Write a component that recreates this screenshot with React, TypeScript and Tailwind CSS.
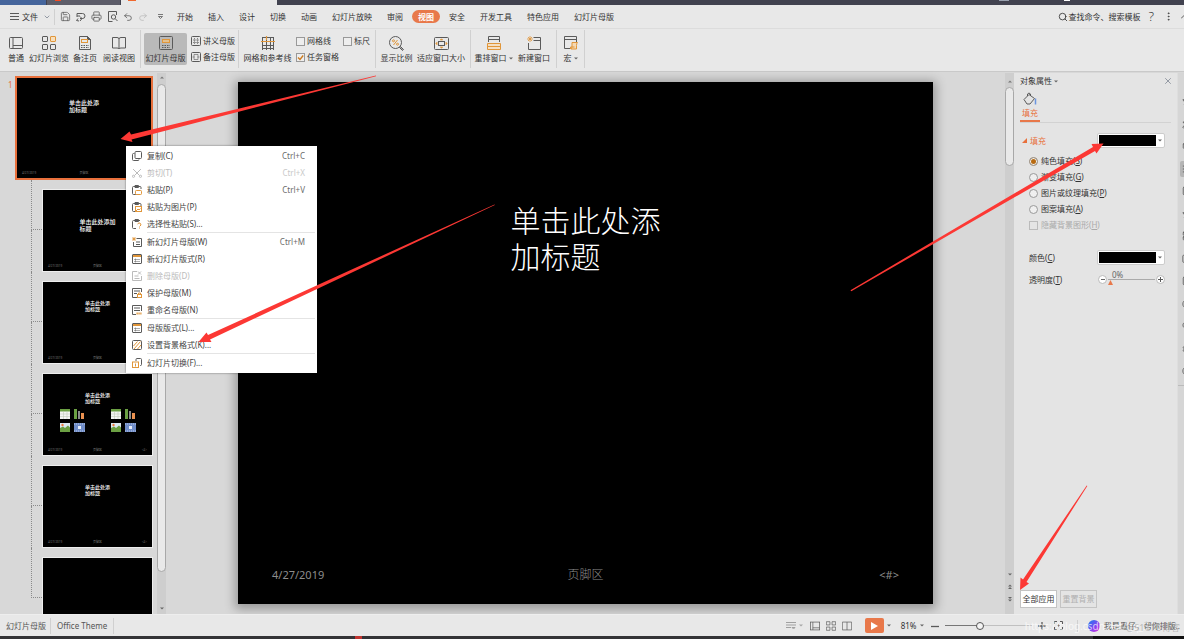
import type { ReactNode } from "react";
import {
  Box, ChevronDown, Circle, Clock, CloudUpload, FolderOpen, Image, LayoutTemplate, MoreVertical, Printer,
  Redo2, Save, Search, Settings, SlidersHorizontal, Square, Star, Undo2, Wand2, X,
} from "lucide-react";

const tabs = ["开始", "插入", "设计", "切换", "动画", "幻灯片放映", "审阅", "视图", "安全", "开发工具", "特色应用", "幻灯片母版"];

const GRAY = "#5a5a5a";
const ORANGE = "#e0963a";

function Icon({ size = 14, box = 14, color = GRAY, children }: { size?: number; box?: number; color?: string; children: ReactNode }) {
  return (
    <svg width={size} height={size} viewBox={`0 0 ${box} ${box}`} fill="none" stroke={color} strokeWidth="1" className="shrink-0" aria-hidden="true">
      {children}
    </svg>
  );
}

function Caret() {
  return <svg width="4" height="3" viewBox="0 0 4 3" className="shrink-0" aria-hidden="true"><path d="M0 .5h4L2 2.5z" fill="#666" /></svg>;
}

const NormalIcon = () => <Icon><rect x=".5" y="1.5" width="13" height="11" rx="1" /><path d="M4 1.5v11M4 9.5h9.500" /></Icon>;
const SorterIcon = () => (
  <Icon>
    <rect x=".5" y=".5" width="5" height="5" rx=".5" />
    <rect x="8.500" y=".5" width="5" height="5" rx=".5" stroke={ORANGE} fill="#f7dfbd" />
    <rect x=".5" y="8.500" width="5" height="5" rx=".5" />
    <rect x="8.500" y="8.500" width="5" height="5" rx=".5" />
  </Icon>
);
const NotesIcon = () => (
  <Icon>
    <path d="M1.500 .5h8l3 3v10h-11z" />
    <path d="M9.500 .5l3 3h-3z" fill={GRAY} />
    <rect x="3.500" y="3.500" width="6" height="3" stroke={ORANGE} />
    <path d="M3 9.500h8M3 11.500h8" strokeDasharray="1.500 1" />
  </Icon>
);
const ReadingIcon = () => <Icon><path d="M.5 1.500h4.500q2 0 2 1.500q0-1.500 2-1.500h4.500v10.500h-4.500q-2 0-2 1q0-1-2-1H.5zM7 3v10" /></Icon>;
const MasterIcon = () => (
  <Icon>
    <rect x=".5" y=".5" width="13" height="13" rx="1" />
    <rect x="3.500" y="3.500" width="7" height="3" stroke={ORANGE} fill="#e3c08e" />
    <path d="M3 9.500h8M3 11.500h8" strokeDasharray="1.500 1" />
  </Icon>
);
const HandoutIcon = () => (
  <Icon size={10} box={10}><rect x=".5" y=".5" width="9" height="9" rx="1" /><path d="M3.500 2v6M6.500 2v6M2 4h6M2 6.500h6" strokeWidth=".7" strokeDasharray="1.500 .7" /></Icon>
);
const NotesMasterIcon = () => (
  <Icon size={10} box={10}><rect x=".5" y=".5" width="9" height="9" rx="1" /><path d="M3 2.500h4v5H3zM1.500 5h2M6.500 5h2" strokeWidth=".6" /></Icon>
);
const GridIcon = () => (
  <Icon><path d="M1.500 1v13M5.500 1v13M9.500 1v13M12.500 1v13M1 1.500h12M1 9.500h12M1 12.500h12" /><path d="M0 5.500h14M5.500 0v4" stroke={ORANGE} strokeWidth="1.200" /></Icon>
);
const ZoomIcon = () => (
  <Icon size={15} box={15}>
    <circle cx="6.500" cy="6.500" r="6" />
    <path d="M10.500 11.500l1-1 3 3-1 1z" fill="#aaa" />
    <path d="M4.500 9l4-5" stroke={ORANGE} />
    <circle cx="4.500" cy="4.800" r="1" stroke={ORANGE} />
    <circle cx="8.500" cy="8.200" r="1" stroke={ORANGE} />
  </Icon>
);
const FitIcon = () => (
  <Icon size={15} box={15}>
    <rect x=".5" y="1.500" width="14" height="12" rx="1" />
    <rect x="4.500" y="5.500" width="6" height="4" />
    <path d="M6.300 4L7.500 2.800 8.700 4zM6.300 11l1.200 1.200L8.700 11zM3 6.300L1.900 7.500 3 8.700zM12 6.300l1.100 1.200L12 8.700z" fill={ORANGE} stroke={ORANGE} strokeWidth=".8" />
  </Icon>
);
const ArrangeIcon = () => (
  <Icon><path d="M1.500 6V.5h11V6M1.500 3.500h11" /><path d="M.5 7.500h13v6H.5zM.5 10.500h13" stroke={ORANGE} fill="#f5e0c4" /></Icon>
);
const NewWindowIcon = () => (
  <Icon>
    <path d="M6.500 1.500h7v12h-12V7M6.500 4.500h7" />
    <path d="M3 0v6M0 3h6M1 1l4 4M5 1L1 5" stroke={ORANGE} strokeWidth=".8" />
  </Icon>
);
const MacroIcon = () => (
  <Icon>
    <path d="M6 12.500H.5V.5h12V6M.5 3.500h12" />
    <path d="M8 6.500h5.500q-1 1-1 3v3.500H7q1-1 1-3zM6.500 13v-2h4" stroke={ORANGE} fill="#f5d9b3" />
  </Icon>
);

function RibbonButton({ label, icon, width, caret, active }: { label: string; icon: ReactNode; width: string; caret?: boolean; active?: boolean }) {
  return (
    <button className={`flex h-8 shrink-0 flex-col items-center justify-between rounded-xs pt-[3px] pb-px whitespace-nowrap ${width} ${active ? "bg-[#b9b9b9]" : ""}`}>
      {icon}
      <span className="flex items-center gap-0.5 leading-3">{label}{caret && <Caret />}</span>
    </button>
  );
}

function RibbonCheck({ label, checked }: { label: string; checked?: boolean }) {
  return (
    <label className="flex items-center gap-0.5 leading-3 whitespace-nowrap">
      <span className="grid">
        <input type="checkbox" defaultChecked={checked} className="peer col-start-1 row-start-1 size-[9px] appearance-none border border-[#999] bg-[#eee]" />
        <svg viewBox="0 0 9 9" className="pointer-events-none col-start-1 row-start-1 hidden size-[9px] peer-checked:block"><path d="M2 4.500l2 2 3.200-4" fill="none" stroke="#cc7a1e" strokeWidth="1.400" /></svg>
      </span>
      {label}
    </label>
  );
}

const Divider = ({ className = "" }: { className?: string }) => <div className={`w-px shrink-0 bg-[#d0d0d0] ${className}`} />;

function MenuBar() {
  return (
    <div className="flex h-6 items-center border-b border-[#dcdcdc] whitespace-nowrap">
      <button className="flex items-center gap-[3px] pl-2.5">
        <Icon size={9} box={9}><path d="M0 1.500h9M0 4.500h9M0 7.500h9" /></Icon>
        <span>文件</span>
        <ChevronDown size={8} strokeWidth={2} className="ml-0.5 text-gray-500" />
      </button>
      <Divider className="ml-[3px] h-4" />
      <div className="ml-[5px] flex items-center gap-[5px] text-[#5a5a5a]">
        <button aria-label="保存"><Save size={11} strokeWidth={1.7} /></button>
        <button aria-label="输出">
          <Icon size={10} box={10}><path d="M1 1.500h5.500a2.500 2.500 0 010 5H4M1 4h3M1 1.500V5M2 6.500l-1.500 2L3 9M4 9l2-2.500L4 4.500" /></Icon>
        </button>
        <button aria-label="打印"><Printer size={11} strokeWidth={1.7} /></button>
        <button aria-label="打印预览">
          <Icon size={11} box={11}><path d="M9.500 4V.5h-8v10h4" /><circle cx="6.500" cy="6" r="2.200" /><path d="M8.200 7.700L10.500 10" /></Icon>
        </button>
        <button aria-label="撤销"><Undo2 size={10} strokeWidth={1.9} /></button>
        <button aria-label="恢复" className="text-[#bbb]"><Redo2 size={10} strokeWidth={1.9} /></button>
        <button aria-label="更多" className="ml-1"><Icon size={7} box={7}><path d="M1 1.500h5M1.500 3.500L3.500 5.500l2-2z" strokeWidth=".8" /></Icon></button>
      </div>
      <nav className="ml-[13px] flex items-center gap-[15px]">
        {tabs.map(t => (
          <button key={t} className={t === "视图" ? "-mx-1.5 h-[13px] rounded-full bg-[#e8784a] px-1.5 font-bold text-white" : ""}>{t}</button>
        ))}
      </nav>
      <div className="ml-auto flex shrink-0 items-center">
        <button className="flex items-center"><Search size={10} strokeWidth={2} />查找命令、搜索模板</button>
        <button aria-label="帮助" className="ml-2 text-[13px] leading-none font-light">?</button>
        <button aria-label="更多选项" className="ml-[9px]"><MoreVertical size={11} strokeWidth={1.6} /></button>
        <button aria-label="收起" className="-mr-[3px] ml-[7px]"><Icon size={6} box={6}><path d="M0 4.500l3-3 3 3" /></Icon></button>
      </div>
    </div>
  );
}

function Ribbon() {
  return (
    <div className="flex h-[43px] items-center border-b border-[#c9c9c9] pb-0.5 pl-[5px]">
      <RibbonButton label="普通" icon={<NormalIcon />} width="w-[22px]" />
      <RibbonButton label="幻灯片浏览" icon={<SorterIcon />} width="w-11" />
      <RibbonButton label="备注页" icon={<NotesIcon />} width="w-7" />
      <RibbonButton label="阅读视图" icon={<ReadingIcon />} width="w-10" />
      <Divider className="ml-px h-[38px]" />
      <div className="ml-[3px] flex items-center gap-1">
        <RibbonButton label="幻灯片母版" icon={<MasterIcon />} width="w-[43px]" active />
        <div className="flex flex-col gap-1">
          <button className="flex items-center gap-0.5 leading-3 whitespace-nowrap"><HandoutIcon />讲义母版</button>
          <button className="flex items-center gap-0.5 leading-3 whitespace-nowrap"><NotesMasterIcon />备注母版</button>
        </div>
      </div>
      <Divider className="ml-[3px] h-[38px]" />
      <RibbonButton label="网格和参考线" icon={<GridIcon />} width="w-[57px]" />
      <div className="grid w-[79px] grid-cols-[47px_auto] gap-y-1">
        <RibbonCheck label="网格线" />
        <RibbonCheck label="标尺" />
        <RibbonCheck label="任务窗格" checked />
      </div>
      <Divider className="h-[38px]" />
      <RibbonButton label="显示比例" icon={<ZoomIcon />} width="w-[41px]" />
      <RibbonButton label="适应窗口大小" icon={<FitIcon />} width="w-12" />
      <Divider className="ml-[5px] h-[38px]" />
      <RibbonButton label="重排窗口" icon={<ArrangeIcon />} width="w-[45px]" caret />
      <RibbonButton label="新建窗口" icon={<NewWindowIcon />} width="w-9" />
      <Divider className="ml-1 h-[38px]" />
      <RibbonButton label="宏" icon={<MacroIcon />} width="w-[27px]" caret />
      <Divider className="h-[38px]" />
    </div>
  );
}

function ThumbFooter() {
  return (
    <div className="mt-auto grid grid-cols-3 px-[5px] pb-[3px] text-[3px] leading-1 font-normal text-[#777]">
      <span>4/27/2019</span>
      <span className="text-center">页脚区</span>
      <span className="text-right">&lt;#&gt;</span>
    </div>
  );
}

function ContentIcons() {
  return (
    <svg width="25" height="24" viewBox="0 0 25 24" aria-hidden="true">
      <path d="M0 1h10v9H0z" fill="#f4f4f4" /><path d="M0 0h10v2.500H0z" fill="#6ba043" />
      <path d="M0 5h10M0 7.500h10M3.500 2.500V10M7 2.500V10" stroke="#b8c4b0" strokeWidth=".5" />
      <path d="M14 0h3v10h-3z" fill="#6ba043" /><path d="M18 2h2v8h-2z" fill="#8a8a8a" /><path d="M21 4h3v6h-3z" fill="#ea9150" />
      <path d="M0 14h10v9H0z" fill="#dce9f3" /><path d="M0 23v-4l3-1.500 2 1.500 3-2.500 2 2V23z" fill="#6ba043" /><circle cx="2.500" cy="16" r="1.200" fill="#ee7b3c" />
      <path d="M14 14h11v9H14z" fill="#6f8cc8" /><path d="M14 15h11M14 22h11" stroke="#b9c8e8" strokeDasharray="1 1" /><path d="M18 17h3v3h-3z" fill="#e8eefa" />
    </svg>
  );
}

const layouts = [
  { lines: ["单击此处添加", "标题"], big: true },
  { lines: ["单击此处添", "加标题"] },
  { lines: ["单击此处添", "加标题"], content: true },
  { lines: ["单击此处添", "加标题"] },
  { lines: [] },
];

function Thumbnails() {
  return (
    <aside className="min-h-0 w-[157px] shrink-0 overflow-hidden pt-[3px]">
      <div className="flex">
        <span className="w-[15px] pt-[3px] pl-2 text-[8px] leading-3 text-[#e8703c]">1</span>
        <button className="flex h-[104px] w-[138px] flex-col border-2 border-[#e8703c] bg-black text-left font-medium text-white">
          <span className="mx-auto mt-[22px] text-[6px] leading-[7px]">单击此处添<br />加标题</span>
          <ThumbFooter />
        </button>
      </div>
      {layouts.map((l, i) => (
        <div key={i} className="ml-[31px] flex h-[92px]">
          <div className="flex w-[11px] flex-col">
            <div className="h-[50px] border-b border-l border-dotted border-[#8a8a8a]" />
            {i < layouts.length - 1 && <div className="flex-1 border-l border-dotted border-[#8a8a8a]" />}
          </div>
          <button className="mt-[9px] flex w-[111px] flex-col border border-[#eee] bg-black text-left font-medium text-white">
            {l.lines.length > 0 && (
              <>
                <span className={`mx-auto ${l.big ? "mt-[29px] text-[6px] leading-[7px]" : "mt-[18px] text-[5px] leading-[6px]"}`}>
                  {l.lines[0]}<br />{l.lines[1]}
                </span>
                {l.content && <div className="mt-[5px] flex justify-center gap-[26px]"><ContentIcons /><ContentIcons /></div>}
                <ThumbFooter />
              </>
            )}
          </button>
        </div>
      ))}
    </aside>
  );
}

function Slide() {
  return (
    <main className="flex min-w-0 flex-1 px-[72px] pt-[9px] pb-[10px]">
      <div className="flex flex-1 flex-col bg-black shadow-[0_2px_10px_3px_rgba(0,0,0,0.3)]">
        <h1 className="mx-auto mt-[121px] text-[30px] leading-9 font-light text-white">单击此处添<br />加标题</h1>
        <footer className="mt-auto grid grid-cols-3 px-[34px] pb-[21px] text-[11px] leading-4 text-[#8d8d8d]">
          <span>4/27/2019</span>
          <span className="text-center text-[12px] font-light">页脚区</span>
          <span className="text-right">&lt;#&gt;</span>
        </footer>
      </div>
    </main>
  );
}

function FillRadio({ label, hotkey, checked }: { label: string; hotkey: string; checked?: boolean }) {
  return (
    <label className="flex h-4 items-center gap-[3px]">
      <input type="radio" name="fill" defaultChecked={checked} className="size-[9px] appearance-none rounded-full border border-[#999] bg-[#efefef] checked:bg-[#b86a10] checked:shadow-[inset_0_0_0_1px_#f4f4f4]" />
      <span>{label}(<u>{hotkey}</u>)</span>
    </label>
  );
}

function ColorPicker({ label }: { label: string }) {
  return (
    <button aria-label={label} aria-haspopup="listbox" className="flex h-[15px] w-[68px] items-center gap-0.5 rounded-xs border border-[#ccc] bg-white p-px">
      <span className="h-[11px] w-[57px] bg-black" />
      <Caret />
    </button>
  );
}

function PropertiesPanel() {
  return (
    <aside className="flex w-[163px] shrink-0 flex-col bg-[#e4e4e4] px-1.5 pt-0.5 pb-1.5">
      <div className="flex h-3 items-center">
        <button className="flex items-center gap-0.5">对象属性<Caret /></button>
        <button aria-label="关闭" className="-mr-0.5 ml-auto text-gray-500"><X size={10} strokeWidth={1.6} /></button>
      </div>
      <div className="mt-[5px] flex border-b border-[#d2d2d2]">
        <button className="flex w-5 flex-col items-center border-b-2 border-[#e8784a] text-[#e8703c]">
          <Icon size={14} box={14}>
            <path d="M1 7.500l5-5 5.500 4-4.500 5.500H4zM4.500 4V2q1.500-2 3 0v2" />
            <path d="M12.500 6.500v6" stroke="#6b95df" strokeWidth="1.500" />
          </Icon>
          <span className="leading-3.5">填充</span>
        </button>
      </div>
      <div className="mt-2.5 flex items-center">
        <button className="flex items-center gap-0.5 pl-0.5 text-[#e8703c]">
          <svg width="6" height="6" viewBox="0 0 6 6" aria-hidden="true"><path d="M5 0v5H0z" fill="#e8703c" /></svg>填充
        </button>
        <div className="ml-auto pr-1.5"><ColorPicker label="填充颜色" /></div>
      </div>
      <fieldset className="mt-[5px] pl-[9px]">
        <FillRadio label="纯色填充" hotkey="S" checked />
        <FillRadio label="渐变填充" hotkey="G" />
        <FillRadio label="图片或纹理填充" hotkey="P" />
        <FillRadio label="图案填充" hotkey="A" />
        <label className="flex h-4 items-center gap-[3px] text-[#aaa]">
          <input type="checkbox" disabled className="size-[9px] appearance-none border border-[#bbb]" />
          <span>隐藏背景图形(<u>H</u>)</span>
        </label>
      </fieldset>
      <div className="mt-[17px] flex items-center justify-between pr-1.5 pl-[9px]">
        <span>颜色(<u>C</u>)</span>
        <ColorPicker label="颜色" />
      </div>
      <div className="mt-[7px] flex items-center justify-between pr-1.5 pl-[9px]">
        <label htmlFor="alpha">透明度(<u>T</u>)</label>
        <div className="flex h-[15px] w-[67px] items-center gap-px">
          <button aria-label="减少" className="grid size-[9px] place-items-center rounded-full border border-[#bbb] bg-white"><span className="h-px w-1 bg-[#666]" /></button>
          <div className="flex flex-1 flex-col pb-0.5">
            <output htmlFor="alpha" className="pl-1 leading-2 text-[#666]">0%</output>
            <input id="alpha" type="range" defaultValue={0} className="h-[7px] w-full appearance-none bg-[linear-gradient(#aaa,#aaa)] bg-[length:100%_1px] bg-top bg-no-repeat [&::-webkit-slider-thumb]:h-[5px] [&::-webkit-slider-thumb]:w-[5px] [&::-webkit-slider-thumb]:appearance-none [&::-webkit-slider-thumb]:bg-[#e8784a] [&::-webkit-slider-thumb]:[clip-path:polygon(50%_0,100%_100%,0_100%)]" />
          </div>
          <button aria-label="增加" className="grid size-[9px] place-items-center rounded-full border border-[#bbb] bg-white"><Icon size={5} box={5}><path d="M0 2.500h5M2.500 0v5" /></Icon></button>
        </div>
      </div>
      <div className="mt-auto flex gap-[3px]">
        <button className="h-[18px] w-[37px] border border-[#c4c4c4] bg-white">全部应用</button>
        <button disabled className="h-[18px] w-[37px] border border-[#c4c4c4] text-[#b0b0b0]">重置背景</button>
      </div>
    </aside>
  );
}

const sideTools = [Star, Wand2, Box, SlidersHorizontal, Square, Star, LayoutTemplate, FolderOpen, Image, Circle, CloudUpload, Settings, Clock];

function SideTools() {
  return (
    <div className="w-[7px] shrink-0 overflow-hidden border-l border-[#dedede] bg-[#d6d6d6] pt-5">
      <div className="flex h-[286px] flex-col justify-between text-[#555]">
        {sideTools.map((Tool, i) => (
          <button key={i} aria-label={`工具 ${i + 1}`} className={`ml-0.5 flex h-4 w-4 items-center rounded-xs pl-0.5 ${i === 3 ? "bg-[#b5b5b5]" : ""}`}>
            <Tool size={10} strokeWidth={2} className="shrink-0" />
          </button>
        ))}
      </div>
      <div className="mt-1.5 h-px bg-[#bbb]" />
    </div>
  );
}

function StatusBar() {
  return (
    <footer className="relative flex h-[22px] shrink-0 items-center border-t border-[#eee] bg-[#e8e8e8] whitespace-nowrap text-[#555]">
      <span className="pl-1.5">幻灯片母版</span>
      <Divider className="ml-1 h-4" />
      <span className="ml-1.5">Office Theme</span>
      <Divider className="ml-1.5 h-4" />
      <div className="ml-auto flex items-center pr-1">
        <button aria-label="备注" className="flex items-center gap-0.5 opacity-50"><Icon size={11} box={11}><path d="M0 2.500h10M0 5h10M0 7.500h5M6 7.500h3L7.500 9z" /></Icon><Caret /></button>
        <button aria-label="普通视图" className="ml-[7px]"><Icon size={10} box={14}><rect x=".5" y="1.500" width="13" height="11" /><path d="M4 1.500v11M4 9.500h9.500" /></Icon></button>
        <button aria-label="幻灯片浏览" className="ml-1.5"><Icon size={10} box={14}><path d="M.5 1h5v4.500h-5zM8.500 1h5v4.500h-5zM.5 8.500h5V13h-5zM8.500 8.500h5V13h-5z" /></Icon></button>
        <button aria-label="阅读视图" className="ml-1.5"><Icon size={10} box={14}><path d="M.5 1.500h13v11H.5zM7 1.500v11" /></Icon></button>
        <button aria-label="放映" className="ml-[13px] grid h-[15px] w-[19px] place-items-center rounded-xs bg-[#e8784a]"><svg width="7" height="8" viewBox="0 0 7 8"><path d="M0 0l7 4-7 4z" fill="#fff" /></svg></button>
        <button aria-label="放映选项" className="ml-[3px]"><Caret /></button>
        <button className="ml-2.5 flex w-[23px] items-center justify-between text-[#333]">81%<Caret /></button>
        <button aria-label="缩小" className="ml-[7px]"><Icon size={8} box={8}><path d="M0 4.500h8" strokeWidth="1.300" /></Icon></button>
        <input type="range" aria-label="缩放" defaultValue={39} className="ml-1.5 h-2.5 w-[87px] appearance-none bg-[linear-gradient(90deg,#777_40%,#c0c0c0_40%)] bg-[length:100%_1px] bg-center bg-no-repeat [&::-webkit-slider-thumb]:size-2 [&::-webkit-slider-thumb]:appearance-none [&::-webkit-slider-thumb]:rounded-full [&::-webkit-slider-thumb]:border [&::-webkit-slider-thumb]:border-[#555] [&::-webkit-slider-thumb]:bg-[#f4f4f4]" />
        <button aria-label="放大" className="ml-1.5"><Icon size={8} box={8}><path d="M0 4h8M4 0v8" strokeWidth="1.300" /></Icon></button>
        <button aria-label="适应窗口" className="ml-2"><Icon size={9} box={9}><path d="M.5 3V.5H3M6 .5h2.500V3M8.500 6v2.500H6M3 8.500H.5V6" /><path d="M4 4h1v1H4z" /></Icon></button>
        <Divider className="ml-3.5 h-3" />
        <button className="ml-2.5 flex items-center gap-1">
          <span className="size-3 rounded-full bg-[linear-gradient(135deg,#3b6cf0_20%,#8a3ff0_60%,#e23ad0)]" />我是墨仔，帮你排版..
        </button>
      </div>
      <span className="pointer-events-none absolute right-[35px] bottom-1 text-[10px] leading-3 text-white/70">https://blog.csdn.net/qq_3</span>
      <span className="pointer-events-none absolute right-1 bottom-0.5 text-[9px] leading-3 text-[#999]/60">@51CTO博客</span>
    </footer>
  );
}

// [name, shortcut]; a null entry is a separator
const menuItems: ([string, string?] | null)[] = [
  ["复制(C)", "Ctrl+C"], ["剪切(T)", "Ctrl+X"], ["粘贴(P)", "Ctrl+V"], ["粘贴为图片(P)"], ["选择性粘贴(S)..."],
  null,
  ["新幻灯片母版(W)", "Ctrl+M"], ["新幻灯片版式(R)"], ["删除母版(D)"], ["保护母版(M)"], ["重命名母版(N)"],
  null,
  ["母版版式(L)..."], ["设置背景格式(K)..."],
  null,
  ["幻灯片切换(F)..."],
];
const disabledItems = ["剪切(T)", "删除母版(D)"];

const clip = "M7 9.500H1.500q-1 0-1-1v-6q0-1 1-1H8q1 0 1 1V4M3 .5h3.500v2H3z";
const layoutFrame = <><rect x=".5" y=".5" width="9" height="9" rx=".5" /><path d="M1 2h8" stroke={ORANGE} strokeWidth="2" /><path d="M3.500 4.500v4M2 5.500h6M2 7.500h6" strokeWidth=".5" /></>;
const menuIcons: Record<string, ReactNode> = {
  "复制(C)": <><rect x="3" y=".5" width="6.500" height="7" rx="1" /><path d="M2.500 2.500h-1q-1 0-1 1v5q0 1 1 1H6q1 0 1-1" /></>,
  "剪切(T)": <><path d="M1 1l6.500 6.500M9 1L2.500 7.500" /><circle cx="1.500" cy="8.300" r="1.100" /><circle cx="8.500" cy="8.300" r="1.100" /></>,
  "粘贴(P)": <><path d={clip} /><rect x="3.500" y="5.500" width="6" height="4" rx=".8" stroke={ORANGE} fill="#fff" /></>,
  "粘贴为图片(P)": <><path d={clip} /><rect x="3.500" y="4.500" width="6" height="5" stroke={ORANGE} fill="#fff" /><path d="M4 9l2-2 1 1 1.500-1.500" stroke={ORANGE} /></>,
  "选择性粘贴(S)...": <><path d="M4 9.500H1.500q-1 0-1-1v-6q0-1 1-1H8M3 .5h3.500v2H3z" /><path d="M5.500 5q1.500-2 3-.5t-1 3M7.500 8.500v1" stroke={ORANGE} /></>,
  "新幻灯片母版(W)": <><path d="M4.500 1.500h5v8h-8V5M4 5h4M4 7.500h4" /><path d="M0 2h4M2 0v4M.5 .5l3 3M3.500 .5l-3 3" stroke={ORANGE} strokeWidth=".8" /></>,
  "新幻灯片版式(R)": layoutFrame,
  "删除母版(D)": <><path d="M5 .5H.5v9h9V5M2.500 5h4M2.500 7.500h5M6 .5l3 3M9 .5l-3 3" /></>,
  "保护母版(M)": <><path d="M5 9.500H.5v-9h9V4M2 3h6M2 5.500h3" /><rect x="5.500" y="6.500" width="4" height="3" stroke={ORANGE} /><path d="M6.500 6.500V5h2v1.500" stroke={ORANGE} /></>,
  "重命名母版(N)": <><path d="M4 9.500H.5v-9h9V6M2 3h6M2 5.500h6" /><path d="M4.500 8.500h5" stroke={ORANGE} strokeWidth="2" strokeDasharray="1.300 .6" /></>,
  "母版版式(L)...": layoutFrame,
  "设置背景格式(K)...": <><rect x=".5" y=".5" width="9" height="9" rx="1" /><path d="M1.500 6l4-4.500M2 9l6.500-7.500M5.500 9l3.500-4" stroke={ORANGE} /></>,
  "幻灯片切换(F)...": <><path d="M4 3V1.500q0-1 1-1h3.500q1 0 1 1v5q0 1-1 1H8" /><rect x=".5" y="4" width="6" height="5.500" stroke={ORANGE} /><path d="M3.500 5.500v3" stroke={ORANGE} /></>,
};

function ContextMenu() {
  return (
    <div role="menu" className="absolute top-[146px] left-[126px] w-[191px] bg-white pt-px pb-0.5 text-[#444] shadow-[0_0_2px_rgba(0,0,0,0.5)]">
      {menuItems.map((m, i) =>
        m === null ? (
          <div key={i} className="mr-0.5 ml-[21px] h-px bg-[#e4e4e4]" />
        ) : (
          <button key={i} role="menuitem" disabled={disabledItems.includes(m[0])} className="flex h-[17px] w-full items-center pr-3 pl-1.5 text-left disabled:text-[#bbb]">
            <Icon size={10} box={10} color={disabledItems.includes(m[0]) ? "#bbb" : GRAY}>{menuIcons[m[0]]}</Icon>
            <span className="ml-[5px]">{m[0]}</span>
            {m[1] && <kbd className="ml-auto font-[inherit] opacity-80">{m[1]}</kbd>}
          </button>
        )
      )}
    </div>
  );
}

function Arrows() {
  return (
    <svg width="1184" height="639" viewBox="0 0 1184 639" fill="#fc3834" className="pointer-events-none absolute top-0 left-0" aria-hidden="true">
      <path d="M120.500 139l9-7.500 1.500 3L376 75.500l0 .8L131.500 139.500l1 2.500z" />
      <path d="M198.500 342l8-9.500 1.500 2.500L494.500 204.500l.3.600L210 339.500l1.500 2.500z" />
      <path d="M1103.500 143.500l-12 .5 1.500 3L850.500 290.200l.8 1L1095 151l1.500 2.500z" />
      <path d="M1020 590l.5-12.500 2.500 2L1086.700 485.500l.6.400L1026.500 582l2.500 1.500z" />
    </svg>
  );
}

export default function App() {
  return (
    <div className="relative flex h-screen flex-col overflow-hidden bg-[#e8e8e8] font-['Noto_Sans','Noto_Sans_CJK_SC',sans-serif] text-[8px] leading-3 text-[#333]">
      <div className="flex h-[5px] shrink-0 bg-[#41424f]">
        <div className="w-[46px] bg-[#45659c]" />
        <div className="ml-px w-[73px] bg-[#5d5d69] pl-2"><div className="h-px w-1.5 bg-[#fa4a1e]" /></div>
        <div className="ml-px w-[156px] bg-[#e8e8e8] pl-[7px]"><div className="h-px w-2 bg-[#f0682e]" /></div>
        <div className="ml-auto flex gap-[55px] pr-[114px]"><div className="h-px w-2.5 bg-gray-400" /><div className="h-px w-1.5 bg-white" /></div>
      </div>
      <header className="shrink-0">
        <MenuBar />
        <Ribbon />
      </header>
      <div className="flex min-h-0 flex-1 bg-[#d8d8d8] pt-px">
        <Thumbnails />
        <div className="flex w-[9px] shrink-0 flex-col items-center bg-[#cecece] pt-[3px] pb-1">
          <svg width="4" height="3" viewBox="0 0 4 3"><path d="M0 2.500h4L2 .5z" fill="#777" /></svg>
          <div className="mt-[5px] mb-[35px] w-full flex-1 rounded-full border border-[#a8a8a8] bg-[#e9e9e9]" />
          <Caret />
        </div>
        <Slide />
        <div className="flex w-[9px] shrink-0 flex-col items-center bg-[#cecece] pt-[7px] pb-3">
          <svg width="4" height="3" viewBox="0 0 4 3"><path d="M0 2.500h4L2 .5z" fill="#777" /></svg>
          <div className="mt-1 h-[79px] w-full rounded-full border border-[#a8a8a8] bg-[#e9e9e9]" />
          <div className="mt-auto flex flex-col items-center gap-2">
            <Caret />
            <svg width="4" height="5" viewBox="0 0 4 5"><path d="M0 2.500h4L2 .5zM0 5h4L2 3z" fill="#666" /></svg>
            <svg width="4" height="5" viewBox="0 0 4 5"><path d="M0 0h4L2 2zM0 2.500h4L2 4.500z" fill="#666" /></svg>
          </div>
        </div>
        <PropertiesPanel />
        <SideTools />
      </div>
      <StatusBar />
      <div className="flex h-[3px] shrink-0 bg-[#333336]">
        <div className="ml-[355px] h-full w-[7px] bg-[#c03430]" />
        <div className="ml-auto h-full w-[91px] bg-[#111]" />
      </div>
      <ContextMenu />
      <Arrows />
    </div>
  );
}
